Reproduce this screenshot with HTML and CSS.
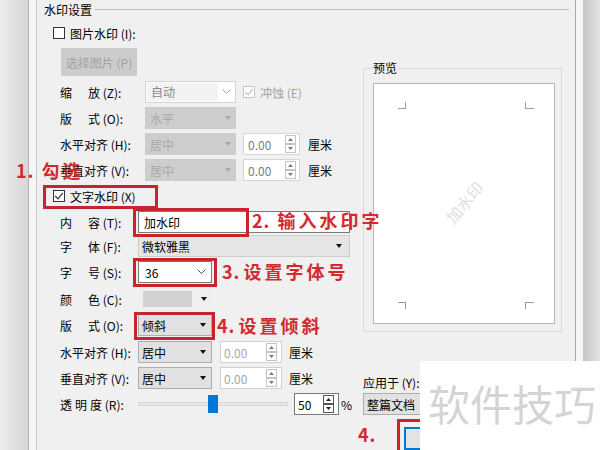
FILE: index.html
```html
<!DOCTYPE html>
<html lang="zh-CN">
<head>
<meta charset="utf-8">
<title>水印设置</title>
<link rel="stylesheet" href="styles.css">
</head>
<body>
<div class="screen">
  <div class="edge-left"></div>
  <div class="frame">
    <div class="dialog">
      <div class="group-head">
        <span class="group-title">水印设置</span>
        <span class="group-line"></span>
      </div>
      <div class="group-body">
        <div class="col-left">
          <div class="check-row pic-row">
            <span class="cb"></span>
            <span class="cb-label">图片水印 (I):</span>
          </div>
          <div class="btn-pick">选择图片 (P)</div>

          <div class="section sec1">
            <div class="frow">
              <span class="lbl"><span class="sp2">缩</span>放 (Z):</span>
              <span class="sel sel-auto"><span class="sel-field">自动</span><svg class="chev" width="9" height="6" viewBox="0 0 9 6"><polyline points="0.5,0.5 4.5,4.5 8.5,0.5" fill="none" stroke="#a8a8a8" stroke-width="1"/></svg></span>
              <span class="cb cb-dis"><svg width="10" height="10" viewBox="0 0 10 10"><polyline points="1.2,5 4,7.8 8.8,1.8" fill="none" stroke="#c4c4c4" stroke-width="1.2"/></svg></span>
              <span class="dis-label">冲蚀 (E)</span>
            </div>
            <div class="frow">
              <span class="lbl"><span class="sp2">版</span>式 (O):</span>
              <span class="sel sel-dis">水平<span class="tri"></span></span>
            </div>
            <div class="frow">
              <span class="lbl">水平对齐 (H):</span>
              <span class="sel sel-dis">居中<span class="tri"></span></span>
              <span class="spin spin-a"><span>0.00</span><span class="spin-btns"><span class="sb"><svg width="5" height="3" viewBox="0 0 5 3"><polygon points="0,3 5,3 2.5,0" fill="#7a7a7a"/></svg></span><span class="sb"><svg width="5" height="3" viewBox="0 0 5 3"><polygon points="0,0 5,0 2.5,3" fill="#7a7a7a"/></svg></span></span></span>
              <span class="unit">厘米</span>
            </div>
            <div class="frow">
              <span class="lbl">垂直对齐 (V):</span>
              <span class="sel sel-dis">居中<span class="tri"></span></span>
              <span class="spin spin-a"><span>0.00</span><span class="spin-btns"><span class="sb"><svg width="5" height="3" viewBox="0 0 5 3"><polygon points="0,3 5,3 2.5,0" fill="#7a7a7a"/></svg></span><span class="sb"><svg width="5" height="3" viewBox="0 0 5 3"><polygon points="0,0 5,0 2.5,3" fill="#7a7a7a"/></svg></span></span></span>
              <span class="unit">厘米</span>
            </div>
          </div>

          <div class="section sec2">
            <div class="check-row">
              <span class="cb"><svg width="10" height="10" viewBox="0 0 10 10"><polyline points="1.2,5 4,7.8 8.8,1.8" fill="none" stroke="#333" stroke-width="1.2"/></svg></span>
              <span class="cb-label">文字水印 (X)</span>
            </div>
            <div class="frow">
              <span class="lbl"><span class="sp2">内</span>容 (T):</span>
              <span class="input">加水印</span>
            </div>
            <div class="frow g2">
              <span class="lbl"><span class="sp2">字</span>体 (F):</span>
              <span class="sel sel-font">微软雅黑<span class="tri tri-dark tri-r7"></span></span>
            </div>
            <div class="frow">
              <span class="lbl"><span class="sp2">字</span>号 (S):</span>
              <span class="sel sel-size">36<svg class="chev chev-r" width="9" height="6" viewBox="0 0 9 6"><polyline points="0.5,0.5 4.5,4.5 8.5,0.5" fill="none" stroke="#555" stroke-width="1"/></svg></span>
            </div>
            <div class="frow g5">
              <span class="lbl"><span class="sp2">颜</span>色 (C):</span>
              <span class="sel sel-color"><span class="swatch"></span><span class="tri tri-dark"></span></span>
            </div>
            <div class="frow">
              <span class="lbl"><span class="sp2">版</span>式 (O):</span>
              <span class="sel sel-std">倾斜<span class="tri tri-dark"></span></span>
            </div>
            <div class="frow g5">
              <span class="lbl">水平对齐 (H):</span>
              <span class="sel sel-std">居中<span class="tri tri-dark"></span></span>
              <span class="spin spin-b"><span>0.00</span><span class="spin-btns"><span class="sb"><svg width="5" height="3" viewBox="0 0 5 3"><polygon points="0,3 5,3 2.5,0" fill="#7a7a7a"/></svg></span><span class="sb"><svg width="5" height="3" viewBox="0 0 5 3"><polygon points="0,0 5,0 2.5,3" fill="#7a7a7a"/></svg></span></span></span>
              <span class="unit unit-b">厘米</span>
            </div>
            <div class="frow">
              <span class="lbl">垂直对齐 (V):</span>
              <span class="sel sel-std">居中<span class="tri tri-dark"></span></span>
              <span class="spin spin-b"><span>0.00</span><span class="spin-btns"><span class="sb"><svg width="5" height="3" viewBox="0 0 5 3"><polygon points="0,3 5,3 2.5,0" fill="#7a7a7a"/></svg></span><span class="sb"><svg width="5" height="3" viewBox="0 0 5 3"><polygon points="0,0 5,0 2.5,3" fill="#7a7a7a"/></svg></span></span></span>
              <span class="unit unit-b">厘米</span>
            </div>
            <div class="frow">
              <span class="lbl"><span class="sp1">透</span><span class="sp1">明</span>度 (R):</span>
              <span class="slider"><span class="track"></span><span class="thumb"></span></span>
              <span class="spin spin-c"><span>50</span><span class="spin-btns spin-btns-c"><span class="sb"><svg width="5" height="3" viewBox="0 0 5 3"><polygon points="0,3 5,3 2.5,0" fill="#222"/></svg></span><span class="sb"><svg width="5" height="3" viewBox="0 0 5 3"><polygon points="0,0 5,0 2.5,3" fill="#222"/></svg></span></span></span>
              <span class="pct">%</span>
            </div>
          </div>
        </div>

        <div class="col-right">
          <div class="preview">
            <span class="preview-title">预览</span>
            <div class="page">
              <span class="corner c-tl"></span>
              <span class="corner c-tr"></span>
              <span class="corner c-bl"></span>
              <span class="corner c-br"></span>
              <span class="page-wm">加水印</span>
            </div>
          </div>
          <div class="apply-label">应用于 (Y):</div>
          <div class="sel sel-apply">整篇文档<span class="tri tri-dark"></span></div>
          <div class="ok-btn"></div>
        </div>
      </div>
    </div>
  </div>
  <div class="edge-right"></div>

  <span class="mark mark-a"></span>
  <span class="mark mark-b"></span>
  <span class="mark mark-c"></span>
  <span class="mark mark-d"></span>
  <span class="mark mark-e"></span>

  <div class="note note-1"><span class="num">1.</span> 勾选</div>
  <div class="note note-2"><span class="num">2.</span> 输入水印字</div>
  <div class="note note-3 tight"><span class="num">3.</span> 设置字体号</div>
  <div class="note note-4 tight"><span class="num">4.</span> 设置倾斜</div>
  <div class="note note-5"><span class="num">4.</span></div>

  <div class="wm">软件技巧</div>
</div>
</body>
</html>
```

FILE: styles.css
```css
* { box-sizing: border-box; }
html, body { margin: 0; padding: 0; }
body {
  width: 600px;
  height: 450px;
  overflow: hidden;
  background: #e4e4e4;
  font-family: "Noto Sans CJK SC", "Microsoft YaHei", "Liberation Sans", sans-serif;
  font-size: 12px;
  color: #000;
}
.screen { position: relative; display: flex; width: 600px; height: 450px; overflow: hidden; }
.edge-left { flex: 0 0 28px; background: linear-gradient(to right, #ececec, #d6d6d6); }
.frame { flex: 0 0 555px; border-left: 1px solid #b2b2b2; background: #f5f5f5; padding: 0 7px; }
.dialog { height: 450px; border-left: 1px solid #c9c9c9; border-right: 1px solid #a9a9a9; background: #f0f0f0; }
.edge-right { flex: 0 0 17px; background: linear-gradient(to right, #c6c6c6, #e4e4e4); }

.group-head { display: flex; height: 20px; padding-left: 7px; }
.group-title { line-height: 20px; }
.group-line { flex: 1; height: 1px; background: #b6b6b6; margin: 9px 6px 0 3px; }
.group-body { display: flex; }
.col-left { flex: 0 0 326px; display: flex; flex-direction: column; }
.col-right { flex: 1; padding-top: 48px; display: flex; flex-direction: column; align-items: flex-start; }

.check-row { display: flex; align-items: center; height: 22px; padding-left: 16px; }
.pic-row { margin-top: 2px; }
.cb { flex: 0 0 auto; width: 12px; height: 12px; border: 1px solid #333; background: #fff; display: flex; align-items: center; justify-content: center; }
.cb-label { margin-left: 5px; white-space: nowrap; }
.cb-dis { border-color: #c6c6c6; margin-left: 7px; }
.dis-label { margin-left: 5px; color: #a2a2a2; white-space: nowrap; }

.btn-pick { margin: 4px 0 0 24px; width: 76px; height: 28px; background: #cccccc; color: #a3a3a3; display: flex; align-items: center; justify-content: center; white-space: nowrap; }

.section { display: flex; flex-direction: column; gap: 4px; }
.sec1 { margin-top: 5px; }
.sec2 { margin-top: 4px; }
.g2 { margin-top: -2px; }
.g5 { margin-top: 1px; }

.frow { display: flex; align-items: center; height: 22px; padding-left: 23px; }
.lbl { flex: 0 0 auto; width: 85px; white-space: nowrap; }
.sec2 .lbl { width: 78px; }
.sp2 { margin-right: 16px; }
.sp1 { margin-right: 3px; }

.sel { display: flex; align-items: center; height: 22px; flex: 0 0 auto; white-space: nowrap; }
.sel-auto { width: 91px; border: 1px solid #d3d3d3; background: #fff; padding: 1px; }
.sel-field { width: 71px; height: 18px; line-height: 18px; background: #f2f2f2; color: #8a8a8a; padding-left: 4px; }
.chev { margin-left: 4px; }
.chev-r { margin-left: auto; margin-right: 5px; }
.sel-dis { width: 91px; background: #cdcdcd; color: #a9a9a9; padding-left: 5px; }
.tri { margin-left: auto; margin-right: 5px; width: 0; height: 0; border-left: 3px solid transparent; border-right: 3px solid transparent; border-top: 4px solid #a9a9a9; }
.tri-dark { border-top-color: #111; }
.tri-r7 { margin-right: 7px; }
.sel-std { width: 74px; background: #e1e1e1; border: 1px solid #adadad; padding-left: 3px; }
.sel-font { width: 212px; background: #e5e5e5; border: 1px solid #cdcdcd; padding-left: 3px; }
.sel-size { width: 74px; background: #fff; border: 1px solid #7a7a7a; padding-left: 6px; }
.sel-color { width: 74px; padding-left: 5px; background: #efefef; }
.swatch { width: 49px; height: 16px; background: #d2d2d2; }
.input { display: flex; align-items: center; width: 212px; height: 22px; border: 1px solid #7a7a7a; background: #fff; padding-left: 5px; }

.spin { display: flex; align-items: center; height: 22px; flex: 0 0 auto; background: #fff; border: 1px solid #d6d6d6; }
.spin-a { width: 57px; margin-left: 7px; padding-left: 4px; color: #7e7e7e; }
.spin-b { width: 62px; margin-left: 8px; padding-left: 3px; color: #a8a8a8; border-color: #d0d0d0; }
.spin-c { width: 45px; margin-left: 6px; padding-left: 3px; border-color: #7a7a7a; }
.spin-btns { margin-left: auto; margin-right: 3px; display: flex; flex-direction: column; width: 11px; height: 18px; }
.spin-b .spin-btns { margin-right: 4px; }
.sb { flex: 1; border: 1px solid #c4c4c4; display: flex; align-items: center; justify-content: center; background: #fff; }
.spin-btns-c { margin-right: 4px; }
.spin-btns-c .sb { border-color: #555; }
.unit { margin-left: 8px; white-space: nowrap; }
.unit-b { margin-left: 7px; }
.pct { margin-left: 2px; }

.slider { position: relative; width: 150px; height: 22px; display: flex; align-items: center; flex: 0 0 auto; }
.track { width: 100%; height: 4px; background: #e7e7e7; border: 1px solid #d6d6d6; }
.thumb { position: absolute; left: 70px; top: 2px; width: 10px; height: 18px; background: #0078d7; }

.preview { width: 199px; height: 264px; border: 1px solid #d9d9d9; }
.preview-title { display: block; width: fit-content; margin: -8px 0 0 8px; padding: 0 1px; line-height: 14px; background: #f0f0f0; }
.page { position: relative; width: 182px; height: 241px; margin: 8px 0 0 9px; background: #fff; border: 1px solid #b5b5b5; overflow: hidden; }
.corner { position: absolute; width: 8px; height: 7px; border: 0 solid #9a9a9a; }
.c-tl { left: 24px; top: 18px; border-right-width: 1px; border-bottom-width: 1px; }
.c-tr { left: 151px; top: 18px; width: 9px; border-left-width: 1px; border-bottom-width: 1px; }
.c-bl { left: 24px; top: 218px; border-right-width: 1px; border-top-width: 1px; }
.c-br { left: 151px; top: 218px; width: 9px; border-left-width: 1px; border-top-width: 1px; }
.page-wm { position: absolute; left: 66px; top: 106px; font-size: 16px; line-height: 24px; color: #e0e0e0; transform: rotate(-50deg); white-space: nowrap; }

.apply-label { margin-top: 43px; line-height: 16px; white-space: nowrap; }
.sel-apply { margin-top: 2px; width: 150px; background: #e1e1e1; border: 1px solid #adadad; padding-left: 3px; }
.ok-btn { margin: 12px 0 0 41px; width: 75px; height: 23px; border: 2px solid #0078d7; background: #e3e3e3; }

.mark { position: absolute; border: 3px solid #c9232b; }
.mark-a { left: 43px; top: 185px; width: 115px; height: 24px; }
.mark-b { left: 133px; top: 208px; width: 116px; height: 29px; }
.mark-c { left: 133px; top: 258px; width: 84px; height: 29px; }
.mark-d { left: 134px; top: 312px; width: 81px; height: 28px; }
.mark-e { left: 397px; top: 419px; width: 40px; height: 40px; }

.note { position: absolute; color: #d42a2f; font-weight: 700; font-size: 18px; line-height: 18px; letter-spacing: 3px; white-space: nowrap; }
.num { letter-spacing: 1px; }
.tight { word-spacing: -4px; }
.note-1 { left: 16px; top: 161px; }
.note-2 { left: 252px; top: 211px; }
.note-3 { left: 222px; top: 262px; }
.note-4 { left: 217px; top: 316px; }
.note-5 { left: 358px; top: 425px; }

.wm { position: absolute; left: 420px; top: 361px; width: 180px; height: 89px; background: #fff; padding: 21px 0 0 8px; font-size: 42px; line-height: 42px; color: #d4d4d4; white-space: nowrap; }
```
